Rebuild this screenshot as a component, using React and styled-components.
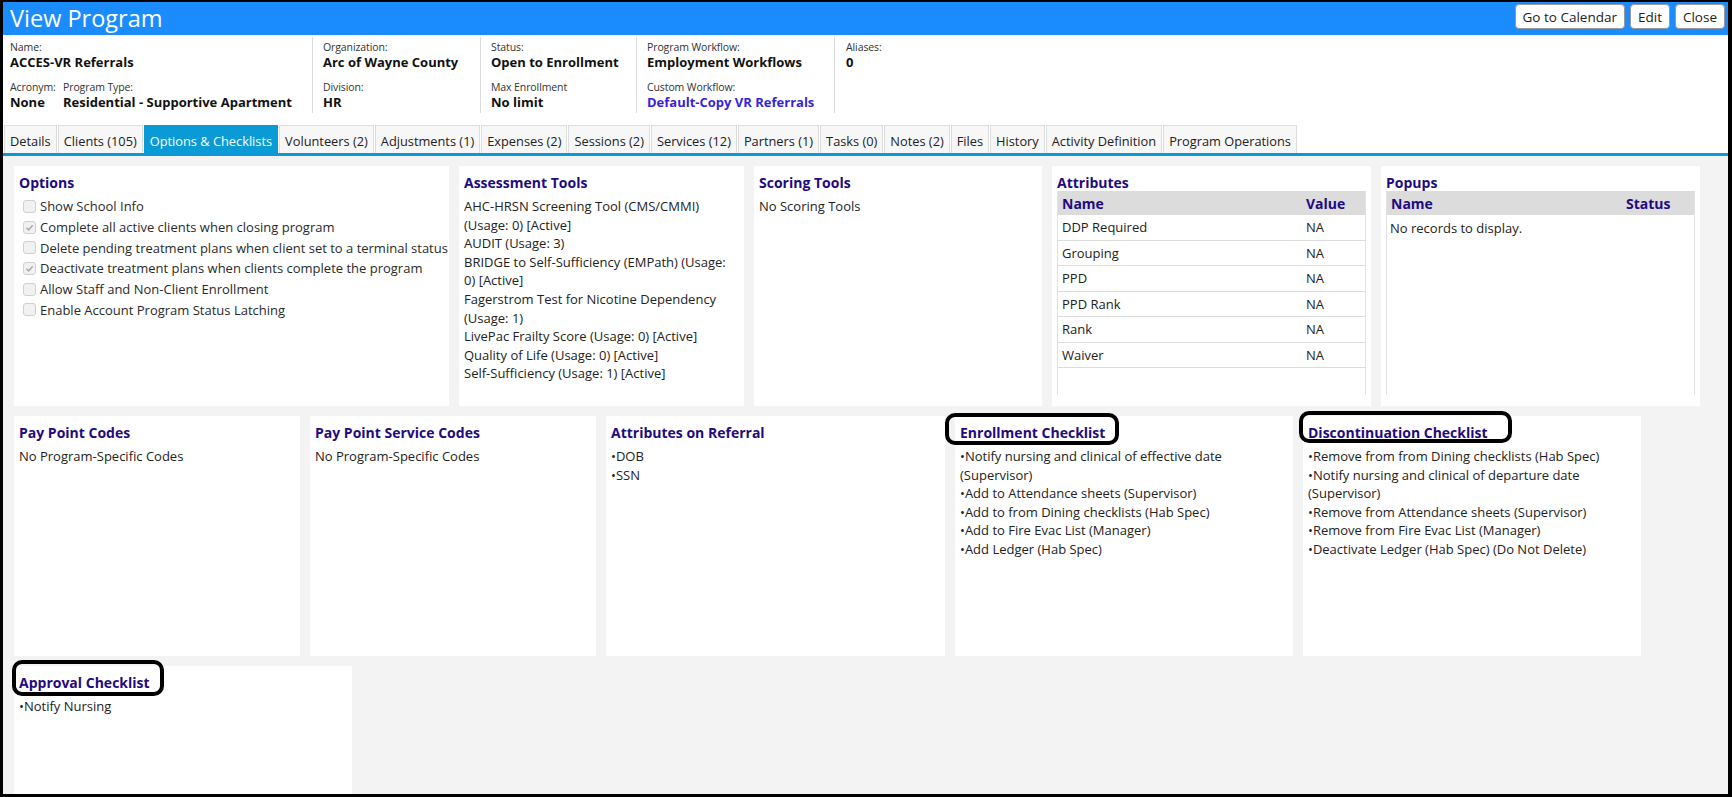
import styled, { createGlobalStyle } from "styled-components"

const GlobalStyle = createGlobalStyle`
  html, body {
    margin: 0;
    padding: 0;
  }
  body {
    font-family: "Open Sans", "Noto Sans", sans-serif;
    font-size: 13px;
    color: #222;
  }
  * {
    box-sizing: border-box;
  }
`

const Frame = styled.div`
  width: 100vw;
  height: 100vh;
  overflow: hidden;
  display: flex;
  flex-direction: column;
  background: #fff;
  border-style: solid;
  border-color: #000;
  border-width: 2px 4px 3px 3px;
`

/* ---------- title bar ---------- */

const TitleBar = styled.header`
  flex-shrink: 0;
  height: 33px;
  display: flex;
  align-items: center;
  justify-content: space-between;
  padding: 0 3px 0 7px;
  background: #1b8cfd;
`

const Title = styled.h1`
  margin: 0;
  font-size: 23.5px;
  font-weight: 400;
  line-height: 33px;
  color: #fff;
`

const ButtonGroup = styled.div`
  align-self: flex-start;
  margin-top: 2px;
  display: flex;
  gap: 5px;
`

const HeaderButton = styled.button`
  height: 25px;
  padding: 0 7px;
  font-family: inherit;
  font-size: 13.5px;
  color: #222;
  background: #fff;
  border: 1px solid #9a9a9a;
  border-radius: 4px;
  cursor: pointer;
`

/* ---------- program summary ---------- */

const InfoBar = styled.section`
  flex-shrink: 0;
  display: flex;
  padding-top: 2px;
  margin-bottom: 12px;
`

const InfoColumn = styled.div`
  flex-shrink: 0;
  width: ${(p) => (p.$w ? `${p.$w}px` : "auto")};
  padding: 3px 0 2px ${(p) => p.$pad ?? 10}px;
  border-right: ${(p) => (p.$last ? "none" : "1px solid #dcdcdc")};
  display: flex;
  flex-direction: column;
  gap: 9px;
`

const FieldRow = styled.div`
  display: flex;
`

const Field = styled.div`
  display: flex;
  flex-direction: column;
  width: ${(p) => (p.$w ? `${p.$w}px` : "auto")};
`

const FieldLabel = styled.span`
  font-size: 10.5px;
  line-height: 14px;
  color: #333;
  letter-spacing: -0.1px;
`

const FieldValue = styled.span`
  font-size: 13px;
  line-height: 17px;
  font-weight: 700;
  white-space: nowrap;
  color: ${(p) => (p.$link ? "#3a1fd6" : "#111")};
`

/* ---------- tabs ---------- */

const TabStrip = styled.nav`
  flex-shrink: 0;
  display: flex;
  padding-left: 1px;
  border-bottom: 3px solid #0a9ad6;
`

const Tab = styled.div`
  height: 28px;
  display: flex;
  align-items: center;
  padding: 3px 5px 0;
  margin-right: 1px;
  white-space: nowrap;
  font-size: 12.8px;
  color: ${(p) => (p.$active ? "#fff" : "#222")};
  background: ${(p) => (p.$active ? "#0a9ad6" : "#f7f7f7")};
  border: 1px solid ${(p) => (p.$active ? "#0a9ad6" : "#dedede")};
  border-bottom: none;
`

/* ---------- panels ---------- */

const Content = styled.main`
  flex: 1;
  overflow: hidden;
  background: #f3f3f3;
  padding: 10px 0 0 11px;
  display: flex;
  flex-direction: column;
  gap: 10px;
`

const PanelRow = styled.div`
  display: flex;
  gap: 10px;
`

const Panel = styled.section`
  flex-shrink: 0;
  width: ${(p) => p.$w}px;
  height: 240px;
  padding: 8px 5px;
  background: #fff;
`

const PanelTitle = styled.h3`
  margin: 0;
  font-size: 14px;
  line-height: 17px;
  font-weight: 700;
  color: #1f0a80;
`

const Marked = styled.span`
  position: relative;
  display: inline-block;

  &::after {
    content: "";
    position: absolute;
    top: ${(p) => p.$t}px;
    right: ${(p) => p.$r}px;
    bottom: ${(p) => p.$b}px;
    left: ${(p) => p.$l}px;
    border: 4px solid #000;
    border-radius: 10px;
    pointer-events: none;
  }
`

const TextList = styled.ul`
  list-style: none;
  margin: 6px 0 0;
  padding: 0 ${(p) => p.$pr ?? 0}px 0 0;
  line-height: 18.6px;
`

const TextItem = styled.li``

const OptionList = styled.ul`
  list-style: none;
  margin: 5px 0 0;
  padding: 0 0 0 4px;
`

const OptionRow = styled.li`
  height: 20.7px;
  display: flex;
  align-items: center;
  gap: 4px;
  white-space: nowrap;
  color: #2a2a2a;
`

const Box = styled.span`
  flex-shrink: 0;
  width: 13px;
  height: 13px;
  display: flex;
  align-items: center;
  justify-content: center;
  background: #f1f1f1;
  border: 1px solid #d0d0d0;
  border-radius: 3px;
`

const Grid = styled.div`
  height: 204px;
  border-left: 1px solid #e2e2e2;
  border-right: 1px solid #e2e2e2;
`

const GridHead = styled.div`
  display: grid;
  grid-template-columns: ${(p) => p.$cols};
  height: 24px;
  align-items: center;
  background: #dcdcdc;
  font-size: 14px;
  font-weight: 700;
  color: #1f0a80;
`

const GridRow = styled.div`
  display: grid;
  grid-template-columns: ${(p) => p.$cols};
  height: 25.5px;
  align-items: center;
  border-bottom: 1px solid #dcdcdc;
`

const Cell = styled.div`
  padding-left: 4px;
`

const EmptyRow = styled.div`
  height: 26px;
  display: flex;
  align-items: center;
  padding-left: 3px;
`

const Checkbox = ({ checked }) => (
  <Box>
    {checked && (
      <svg width="9" height="9" viewBox="0 0 10 10">
        <path d="M1.5 5.2 L4 7.6 L8.6 2.4" fill="none" stroke="#a9a9a9" strokeWidth="1.6" />
      </svg>
    )}
  </Box>
)

const tabs = [
  "Details",
  "Clients (105)",
  "Options & Checklists",
  "Volunteers (2)",
  "Adjustments (1)",
  "Expenses (2)",
  "Sessions (2)",
  "Services (12)",
  "Partners (1)",
  "Tasks (0)",
  "Notes (2)",
  "Files",
  "History",
  "Activity Definition",
  "Program Operations",
]

const options = [
  ["Show School Info", false],
  ["Complete all active clients when closing program", true],
  ["Delete pending treatment plans when client set to a terminal status", false],
  ["Deactivate treatment plans when clients complete the program", true],
  ["Allow Staff and Non-Client Enrollment", false],
  ["Enable Account Program Status Latching", false],
]

const assessmentTools = [
  "AHC-HRSN Screening Tool (CMS/CMMI) (Usage: 0) [Active]",
  "AUDIT (Usage: 3)",
  "BRIDGE to Self-Sufficiency (EMPath) (Usage: 0) [Active]",
  "Fagerstrom Test for Nicotine Dependency (Usage: 1)",
  "LivePac Frailty Score (Usage: 0) [Active]",
  "Quality of Life (Usage: 0) [Active]",
  "Self-Sufficiency (Usage: 1) [Active]",
]

const attributes = ["DDP Required", "Grouping", "PPD", "PPD Rank", "Rank", "Waiver"]

const enrollment = [
  "Notify nursing and clinical of effective date (Supervisor)",
  "Add to Attendance sheets (Supervisor)",
  "Add to from Dining checklists (Hab Spec)",
  "Add to Fire Evac List (Manager)",
  "Add Ledger (Hab Spec)",
]

const discontinuation = [
  "Remove from from Dining checklists (Hab Spec)",
  "Notify nursing and clinical of departure date (Supervisor)",
  "Remove from Attendance sheets (Supervisor)",
  "Remove from Fire Evac List (Manager)",
  "Deactivate Ledger (Hab Spec) (Do Not Delete)",
]

const BulletList = ({ items }) => (
  <TextList>
    {items.map((item) => (
      <TextItem key={item}>•{item}</TextItem>
    ))}
  </TextList>
)

const App = () => {
  return (
    <>
      <GlobalStyle />
      <Frame>
        <TitleBar>
          <Title>View Program</Title>
          <ButtonGroup>
            <HeaderButton>Go to Calendar</HeaderButton>
            <HeaderButton>Edit</HeaderButton>
            <HeaderButton>Close</HeaderButton>
          </ButtonGroup>
        </TitleBar>

        <InfoBar>
          <InfoColumn $w={310} $pad={7}>
            <Field>
              <FieldLabel>Name:</FieldLabel>
              <FieldValue>ACCES-VR Referrals</FieldValue>
            </Field>
            <FieldRow>
              <Field $w={53}>
                <FieldLabel>Acronym:</FieldLabel>
                <FieldValue>None</FieldValue>
              </Field>
              <Field>
                <FieldLabel>Program Type:</FieldLabel>
                <FieldValue>Residential - Supportive Apartment</FieldValue>
              </Field>
            </FieldRow>
          </InfoColumn>
          <InfoColumn $w={168}>
            <Field>
              <FieldLabel>Organization:</FieldLabel>
              <FieldValue>Arc of Wayne County</FieldValue>
            </Field>
            <Field>
              <FieldLabel>Division:</FieldLabel>
              <FieldValue>HR</FieldValue>
            </Field>
          </InfoColumn>
          <InfoColumn $w={156}>
            <Field>
              <FieldLabel>Status:</FieldLabel>
              <FieldValue>Open to Enrollment</FieldValue>
            </Field>
            <Field>
              <FieldLabel>Max Enrollment</FieldLabel>
              <FieldValue>No limit</FieldValue>
            </Field>
          </InfoColumn>
          <InfoColumn $w={198}>
            <Field>
              <FieldLabel>Program Workflow:</FieldLabel>
              <FieldValue>Employment Workflows</FieldValue>
            </Field>
            <Field>
              <FieldLabel>Custom Workflow:</FieldLabel>
              <FieldValue $link>Default-Copy VR Referrals</FieldValue>
            </Field>
          </InfoColumn>
          <InfoColumn $last $pad={11}>
            <Field>
              <FieldLabel>Aliases:</FieldLabel>
              <FieldValue>0</FieldValue>
            </Field>
          </InfoColumn>
        </InfoBar>

        <TabStrip>
          {tabs.map((t) => (
            <Tab key={t} $active={t === "Options & Checklists"}>
              {t}
            </Tab>
          ))}
        </TabStrip>

        <Content>
          <PanelRow>
            <Panel $w={435}>
              <PanelTitle>Options</PanelTitle>
              <OptionList>
                {options.map(([label, checked]) => (
                  <OptionRow key={label}>
                    <Checkbox checked={checked} />
                    {label}
                  </OptionRow>
                ))}
              </OptionList>
            </Panel>
            <Panel $w={285}>
              <PanelTitle>Assessment Tools</PanelTitle>
              <TextList $pr={4}>
                {assessmentTools.map((t) => (
                  <TextItem key={t}>{t}</TextItem>
                ))}
              </TextList>
            </Panel>
            <Panel $w={288}>
              <PanelTitle>Scoring Tools</PanelTitle>
              <TextList>
                <TextItem>No Scoring Tools</TextItem>
              </TextList>
            </Panel>
            <Panel $w={319}>
              <PanelTitle>Attributes</PanelTitle>
              <Grid>
                <GridHead $cols="244px 1fr">
                  <Cell>Name</Cell>
                  <Cell>Value</Cell>
                </GridHead>
                {attributes.map((a) => (
                  <GridRow key={a} $cols="244px 1fr">
                    <Cell>{a}</Cell>
                    <Cell>NA</Cell>
                  </GridRow>
                ))}
              </Grid>
            </Panel>
            <Panel $w={319}>
              <PanelTitle>Popups</PanelTitle>
              <Grid>
                <GridHead $cols="235px 1fr">
                  <Cell>Name</Cell>
                  <Cell>Status</Cell>
                </GridHead>
                <EmptyRow>No records to display.</EmptyRow>
              </Grid>
            </Panel>
          </PanelRow>

          <PanelRow>
            <Panel $w={286}>
              <PanelTitle>Pay Point Codes</PanelTitle>
              <TextList>
                <TextItem>No Program-Specific Codes</TextItem>
              </TextList>
            </Panel>
            <Panel $w={286}>
              <PanelTitle>Pay Point Service Codes</PanelTitle>
              <TextList>
                <TextItem>No Program-Specific Codes</TextItem>
              </TextList>
            </Panel>
            <Panel $w={339}>
              <PanelTitle>Attributes on Referral</PanelTitle>
              <BulletList items={["DOB", "SSN"]} />
            </Panel>
            <Panel $w={338}>
              <PanelTitle>
                <Marked $t={-11} $r={-14} $b={-4} $l={-15}>
                  Enrollment Checklist
                </Marked>
              </PanelTitle>
              <BulletList items={enrollment} />
            </Panel>
            <Panel $w={338}>
              <PanelTitle>
                <Marked $t={-13} $r={-24} $b={-2} $l={-9}>
                  Discontinuation Checklist
                </Marked>
              </PanelTitle>
              <BulletList items={discontinuation} />
            </Panel>
          </PanelRow>

          <PanelRow>
            <Panel $w={338}>
              <PanelTitle>
                <Marked $t={-14} $r={-14} $b={-5} $l={-7}>
                  Approval Checklist
                </Marked>
              </PanelTitle>
              <BulletList items={["Notify Nursing"]} />
            </Panel>
          </PanelRow>
        </Content>
      </Frame>
    </>
  )
}

export default App
